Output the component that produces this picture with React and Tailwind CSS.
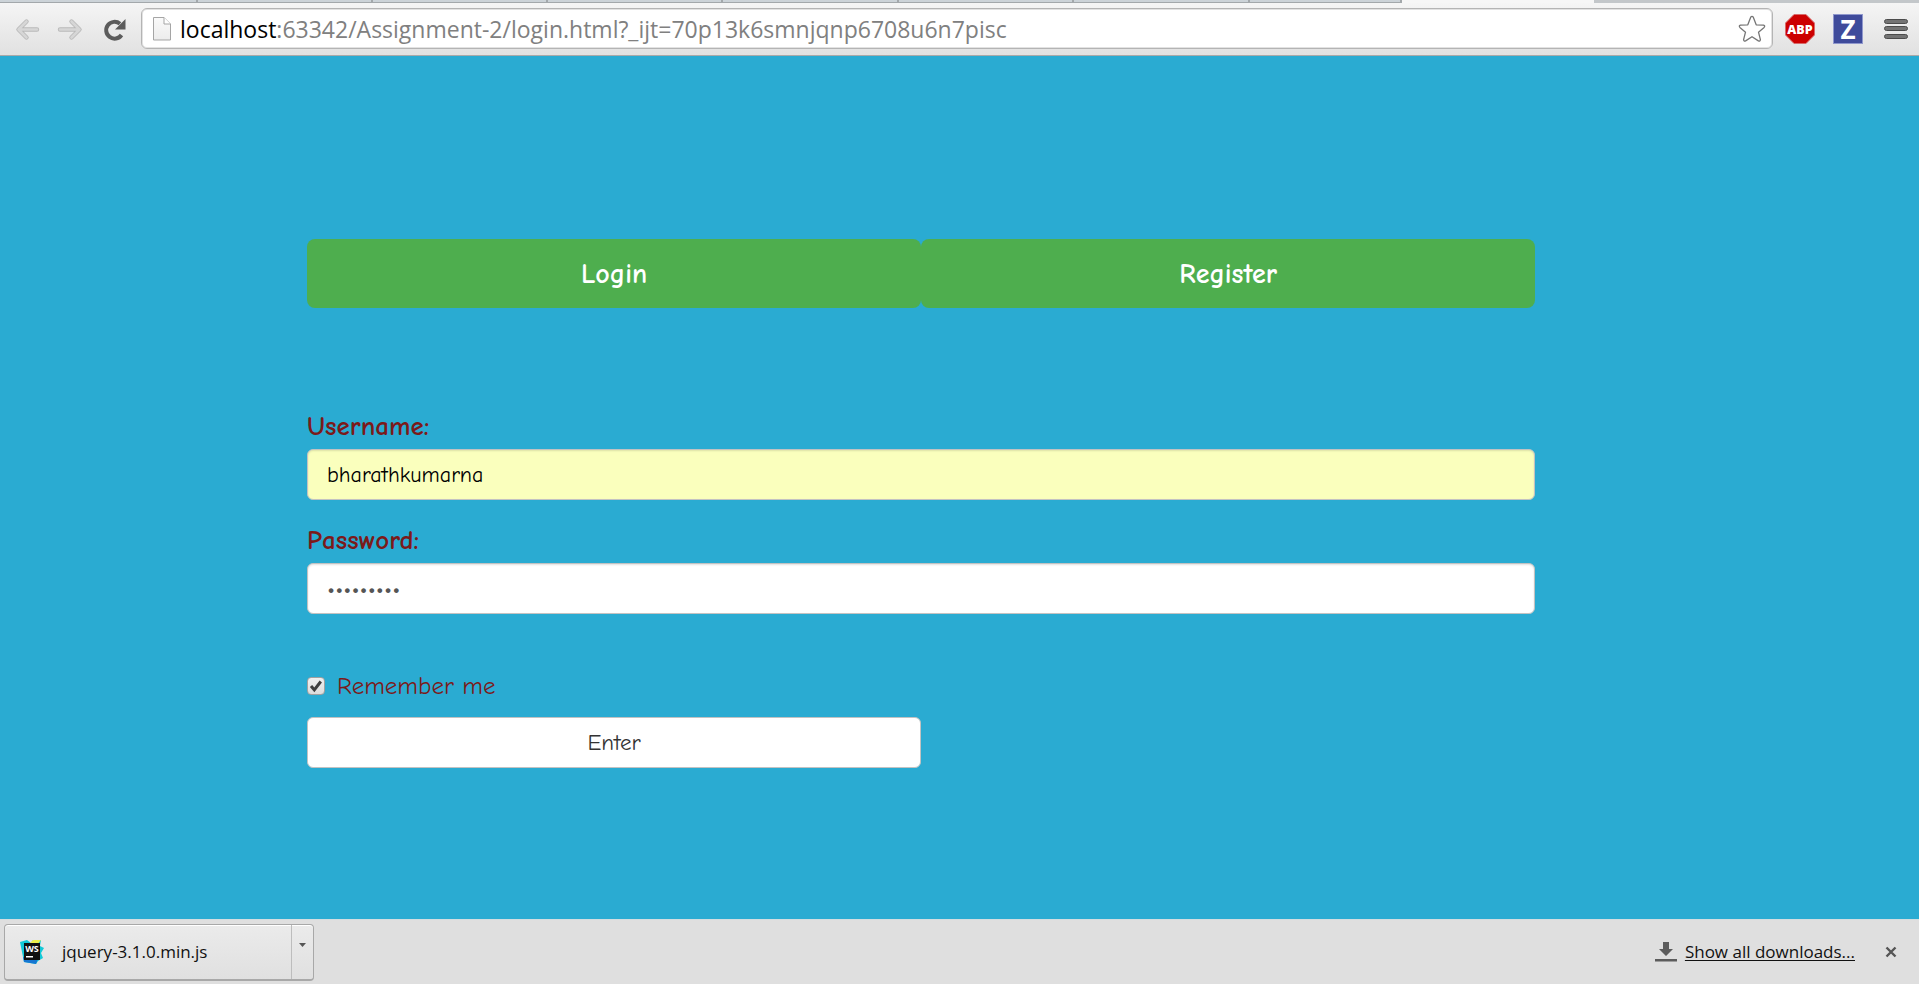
import React from "react";

const tabs = [198, 175, 175, 175, 176, 175, 176, 152];

function PageIcon() {
  return (
    <svg className="h-6 w-[18px] shrink-0" viewBox="0 0 18 24" aria-hidden="true">
      <defs>
        <linearGradient id="sheet" x1="0" y1="0" x2="0" y2="1">
          <stop offset="0" stopColor="#fafafa" />
          <stop offset="1" stopColor="#ececec" />
        </linearGradient>
      </defs>
      <path d="M.5.5H11L17.500 7v16H.5z" fill="url(#sheet)" stroke="#a5a5a5" />
      <path d="M11 .5V7h6.500" fill="#fff" stroke="#a5a5a5" />
    </svg>
  );
}

function Toolbar() {
  return (
    <header className="flex flex-col border-b border-[#a9a9a9] bg-linear-to-b from-[#f6f6f6] to-[#e1e1e1]">
      <div className="flex h-[3px] overflow-hidden bg-[#c3c7ca]" aria-hidden="true">
        {tabs.map((w, i) => (
          <span key={i} className="h-full border-r-2 border-b border-[#a3a8ab] bg-[#ccd3d8]" style={{ width: w }} />
        ))}
        <span className="w-48 bg-[#f6f6f6]" />
      </div>
      <div className="flex items-center pt-[5px] pr-[11px] pb-1.5 pl-[14px]">
        <button type="button" aria-label="Back" className="h-7 w-7">
          <svg viewBox="0 0 28 28" fill="none" strokeLinecap="round" strokeLinejoin="round">
            <path d="M12.500 6.500 4.500 14.500l8 8M5 14.500h18" stroke="#b9b9b9" strokeWidth="4.400" />
            <path d="M12.500 6.500 4.500 14.500l8 8M5 14.500h18" stroke="#d6d6d6" strokeWidth="2.600" />
          </svg>
        </button>
        <button type="button" aria-label="Forward" className="ml-[14px] h-7 w-7">
          <svg viewBox="0 0 28 28" fill="none" strokeLinecap="round" strokeLinejoin="round">
            <path d="m15.500 6.500 8 8-8 8M23 14.500H4" stroke="#b9b9b9" strokeWidth="4.400" />
            <path d="m15.500 6.500 8 8-8 8M23 14.500H4" stroke="#d6d6d6" strokeWidth="2.600" />
          </svg>
        </button>
        <button type="button" aria-label="Reload" className="ml-4 h-7 w-7">
          <svg viewBox="0 0 28 28" fill="none">
            <path d="M21.500 20A8.400 8.400 0 1 1 20 8.800" stroke="#5c5c5c" strokeWidth="4" />
            <path d="M25.500 4v10.500H15z" fill="#5c5c5c" />
          </svg>
        </button>
        <div className="ml-[13px] flex h-[41px] min-w-0 flex-1 items-center rounded-md border border-[#b4b4b4] bg-white pr-1.5 pl-[11px] shadow-[inset_0_0_0_1px_#e2e2e2]">
          <PageIcon />
          <div className="ml-[9px] min-w-0 flex-1 truncate font-['Segoe_UI','Open_Sans',sans-serif] text-[23px] leading-8 text-[#808080]">
            <span className="text-black">localhost</span>:63342/Assignment-2/login.html?_ijt=70p13k6smnjqnp6708u6n7pisc
          </div>
          <button type="button" aria-label="Bookmark this page" className="h-7 w-7">
            <svg viewBox="0 0 28 28" fill="#fff" stroke="#757575" strokeWidth="1.300" strokeLinejoin="round">
              <path d="M12.700 2.200q1.300-1.800 2.600 0l2.900 7.600 7.300.3q2 .7.600 2.300l-5.600 4.800 1.900 7.500q-.2 1.800-2 1.200L14 21.700l-6.400 4.200q-1.800.6-2-1.200l1.900-7.500-5.600-4.800q-1.400-1.600.6-2.300l7.300-.3z" />
            </svg>
          </button>
        </div>
        <button type="button" aria-label="Adblock Plus" className="ml-3 h-[30px] w-[30px]">
          <svg viewBox="0 0 30 30">
            <path d="M9 .5h12L29.500 9v12L21 29.500H9L.5 21V9z" fill="#cc0000" stroke="#d86a6a" />
            <text x="15" y="19.500" textAnchor="middle" fill="#fff" fontFamily="Open Sans, sans-serif" fontWeight="800" fontSize="12.500">ABP</text>
          </svg>
        </button>
        <button type="button" aria-label="Z extension" className="ml-[18px] flex h-[30px] w-[30px] items-center justify-center border border-[#8f97cc] bg-[#3f4b9b] font-['Open_Sans',sans-serif] text-[26px] leading-7 font-bold text-white">
          Z
        </button>
        <button type="button" aria-label="Menu" className="ml-[21px] flex h-6 w-6 flex-col justify-between py-0.5">
          <span className="h-[5px] w-full rounded-full border border-[#4c4c4c] bg-[#747474]" />
          <span className="h-[5px] w-full rounded-full border border-[#4c4c4c] bg-[#747474]" />
          <span className="h-[5px] w-full rounded-full border border-[#4c4c4c] bg-[#747474]" />
        </button>
      </div>
    </header>
  );
}

const field =
  "block h-[51px] w-full rounded-md border border-[#c2c2c2] px-[19px] shadow-[inset_0_1px_2px_rgba(0,0,0,0.12)] outline-none";
const fieldLabel = "block pt-0.5 pb-1.5 text-[27px] leading-8 font-bold";
const tab = "h-[69px] rounded-lg bg-[#4eae4e] text-[28px] leading-9 font-bold text-white";

function LoginPage() {
  return (
    <main className="flex-1 bg-[#2aabd2] font-['Comic_Sans_MS','Comic_Neue',Lato,sans-serif] text-[#7b1a1a]">
      <div className="ml-[16%] w-[64%] pt-[183px]">
        <nav className="grid grid-cols-2">
          <button type="button" className={tab}>Login</button>
          <button type="button" className={tab}>Register</button>
        </nav>
        <form className="mt-[101px]" onSubmit={(e) => e.preventDefault()}>
          <label htmlFor="username" className={fieldLabel}>Username:</label>
          <input id="username" type="text" defaultValue="bharathkumarna" className={field + " bg-[#faffbd] text-[22px] text-black"} />
          <div className="mt-[23px]">
            <label htmlFor="password" className={fieldLabel}>Password:</label>
            <input id="password" type="password" defaultValue="abcdefghi" className={field + " bg-white text-[26px] text-[#555]"} />
          </div>
          <div className="mt-[56px] flex h-8 items-center">
            <span className="relative flex h-[18px] w-[18px]">
              <input id="remember" type="checkbox" defaultChecked className="h-[18px] w-[18px] appearance-none rounded-sm border border-[#a0a0a0] bg-linear-to-b from-[#f0f0f0] to-[#dcdcdc]" />
              <svg className="pointer-events-none absolute inset-0" viewBox="0 0 18 18" aria-hidden="true">
                <path d="m4 9 3.300 3.800L13.800 4.500" fill="none" stroke="#3f3f3f" strokeWidth="3" />
              </svg>
            </span>
            <label htmlFor="remember" className="ml-3 text-[25px] leading-8">Remember me</label>
          </div>
          <button type="submit" className="mt-[15px] block h-[51px] w-1/2 rounded-md border border-[#c2c2c2] bg-white text-[23px] leading-7 text-[#333]">Enter</button>
        </form>
      </div>
    </main>
  );
}

function DownloadBar() {
  return (
    <footer className="flex h-[65px] items-center border-t border-[#d3dde0] bg-[#dfdfdf] pr-[22px] pl-1 font-['Segoe_UI','Open_Sans',sans-serif] text-[17px] leading-6 text-[#111]">
      <div className="flex h-[57px] w-[310px] rounded border border-b-2 border-[#a8a8a8] bg-linear-to-b from-[#ebebeb] to-[#e0e0e0] shadow-[inset_0_1px_0_#fff]">
        <button type="button" className="flex flex-1 items-center border-r border-[#bdbdbd] pl-[15px]">
          <svg className="h-[25px] w-6" viewBox="0 0 24 25" aria-hidden="true">
            <path d="M0 3 7 1l4 3 2-3h8l-1 6 4 2-3 5 2 5-5 3-2 3-12-2z" fill="#12c9d8" />
            <path d="m3 18 15 2-2 5-12-2z" fill="#1676d2" />
            <path d="M13 1h8l-4 5-7-2z" fill="#edf04b" />
            <path d="M4 4h16v17H4z" fill="#101010" />
            <text x="12" y="13" textAnchor="middle" fill="#fff" fontFamily="Open Sans, sans-serif" fontWeight="700" fontSize="9">WS</text>
            <path d="M6 17h7v1.500H6z" fill="#fff" />
          </svg>
          <span className="ml-[18px]">jquery-3.1.0.min.js</span>
        </button>
        <button type="button" aria-label="Download options" className="flex w-[21px] justify-center pt-[18px]">
          <svg className="h-1 w-[7px]" viewBox="0 0 7 4"><path d="M0 0h7L3.500 4z" fill="#555" /></svg>
        </button>
      </div>
      <a href="#downloads" className="ml-auto flex items-center">
        <svg className="h-5 w-[22px]" viewBox="0 0 22 20" aria-hidden="true">
          <path d="M8 0h6v7h4l-7 7-7-7h4zM0 17h22v2.500H0z" fill="#5c5c5c" />
        </svg>
        <span className="ml-2 underline underline-offset-2">Show all downloads...</span>
      </a>
      <button type="button" aria-label="Close" className="ml-[30px] h-3 w-3">
        <svg viewBox="0 0 12 12"><path d="m1.500 1.500 9 9m0-9-9 9" stroke="#555" strokeWidth="2.400" /></svg>
      </button>
    </footer>
  );
}

export default function App() {
  return (
    <div className="flex min-h-screen flex-col">
      <Toolbar />
      <LoginPage />
      <DownloadBar />
    </div>
  );
}
